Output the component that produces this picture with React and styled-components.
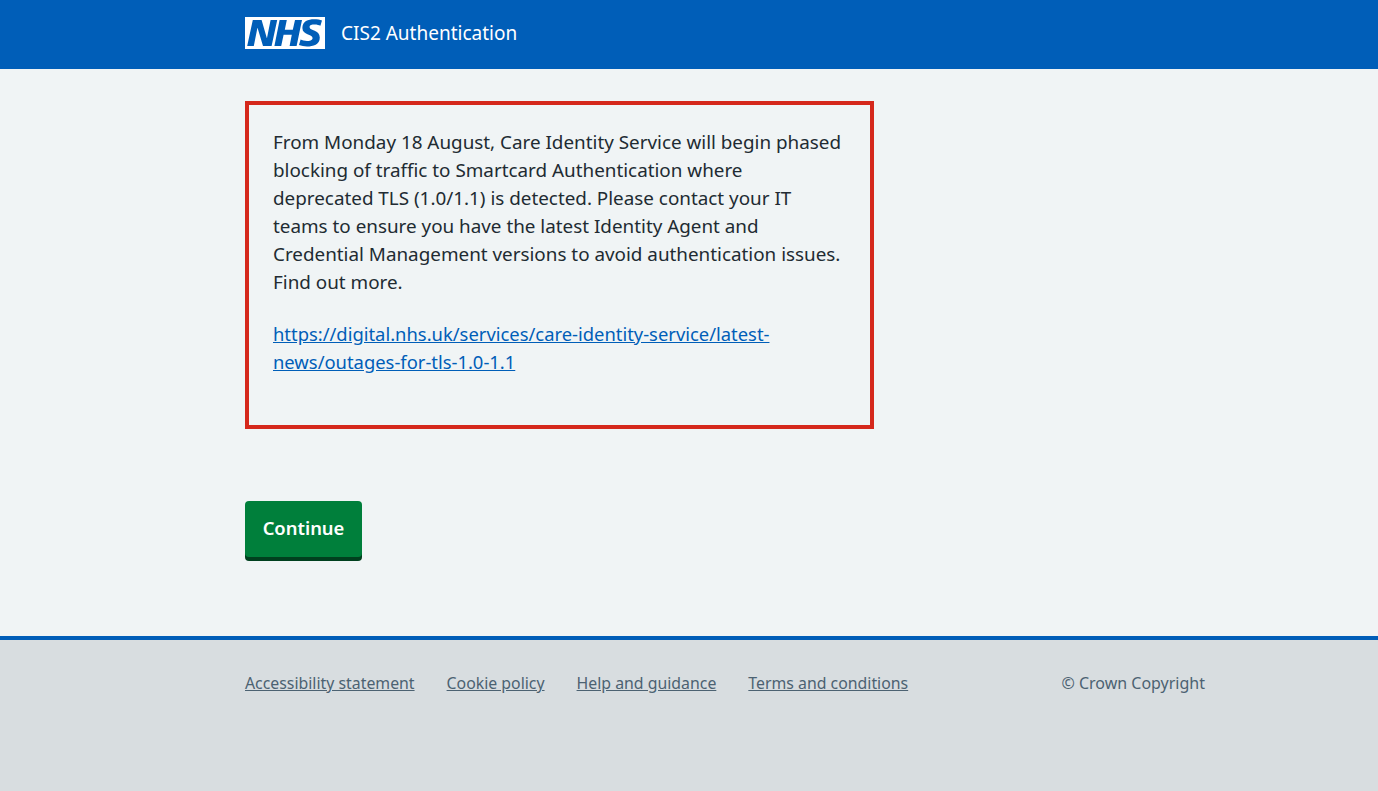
import React from 'react'
import styled, { createGlobalStyle } from 'styled-components'

const Global = createGlobalStyle`
  html, body {
    margin: 0;
    padding: 0;
    background: #f0f4f5;
    color: #212b32;
    font-family: "Noto Sans", "Open Sans", Arial, sans-serif;
  }
  a { color: inherit; }
`

const Page = styled.div`
  min-height: 791px;
  display: flex;
  flex-direction: column;
`

const Container = styled.div`
  width: 960px;
  margin-left: 245px;
`

const Header = styled.header`
  background: #005eb8;
  height: 69px;
  display: flex;
  align-items: flex-start;
`

const HeaderInner = styled(Container)`
  display: flex;
  align-items: center;
  gap: 16px;
  padding-top: 17px;
`

const Logo = styled.svg`
  width: 80px;
  height: 32px;
  display: block;
`

const ServiceName = styled.span`
  color: #fff;
  font-size: 19px;
  line-height: 32px;
`

const Main = styled.main`
  height: 567px;
  padding-top: 32px;
  box-sizing: border-box;
`

const Notice = styled.div`
  width: 629px;
  height: 328px;
  box-sizing: border-box;
  border: 4px solid #d5281b;
  padding: 23px 24px 0;
  font-size: 18.85px;
  line-height: 28px;
`

const Para = styled.p`
  margin: 0 0 24px;
`

const NoticeLink = styled.a`
  color: #005eb8;
  font-size: 18.4px;
`

const Button = styled.button`
  display: block;
  margin-top: 72px;
  width: 117px;
  height: 56px;
  border: 0;
  border-radius: 4px;
  background: #007f3b;
  box-shadow: 0 4px 0 #00401e;
  color: #fff;
  font-family: inherit;
  font-size: 18.4px;
  font-weight: 600;
  line-height: 24px;
  padding: 0 0 2px;
`

const Footer = styled.footer`
  flex: 1;
  background: #d8dde0;
  border-top: 4px solid #005eb8;
  height: 151px;
  box-sizing: border-box;
`

const FooterInner = styled(Container)`
  display: flex;
  justify-content: space-between;
  padding-top: 31px;
  font-size: 15.85px;
  line-height: 24px;
  color: #4c6272;
`

const FooterLinks = styled.div`
  display: flex;
  gap: 32px;
`

const FooterLink = styled.a`
  color: #4c6272;
`

const Copyright = styled.span`
  font-size: 16px;
`

const links = ['Accessibility statement', 'Cookie policy', 'Help and guidance', 'Terms and conditions']

export default function App() {
  return (
    <Page>
      <Global />
      <Header>
        <HeaderInner>
          <Logo viewBox="0 0 40 16" role="img" aria-label="NHS">
            <path fill="#fff" d="M0 0h40v16H0z" />
            <path
              fill="#005eb8"
              d="M3.9 1.5h4.4l2.6 9h.1l1.8-9h3.3l-2.8 13H9l-2.7-9h-.1l-1.8 9H1.1M17.3 1.5h3.6l-1 4.9h4L25 1.5h3.5l-2.7 13h-3.5l1.1-5.6h-4.1l-1.2 5.6h-3.4M37.7 4.4c-.7-.3-1.6-.6-2.9-.6-1.4 0-2.5.2-2.5 1.3 0 1.8 5.1 1.2 5.1 5.1 0 3.6-3.3 4.5-6.4 4.5-1.3 0-2.9-.3-4-.7l.8-2.7c.7.4 2.1.7 3.2.7s2.8-.2 2.8-1.5c0-2.1-5.1-1.3-5.1-5 0-3.4 2.9-4.4 5.8-4.4 1.6 0 3.1.2 4 .6"
            />
          </Logo>
          <ServiceName>CIS2 Authentication</ServiceName>
        </HeaderInner>
      </Header>
      <Main>
        <Container>
          <Notice>
            <Para>
              From Monday 18 August, Care Identity Service will begin phased<br />
              blocking of traffic to Smartcard Authentication where<br />
              deprecated TLS (1.0/1.1) is detected. Please contact your IT<br />
              teams to ensure you have the latest Identity Agent and<br />
              Credential Management versions to avoid authentication issues.<br />
              Find out more.
            </Para>
            <Para>
              <NoticeLink href="#">
                https://digital.nhs.uk/services/care-identity-service/latest-<br />
                news/outages-for-tls-1.0-1.1
              </NoticeLink>
            </Para>
          </Notice>
          <Button>Continue</Button>
        </Container>
      </Main>
      <Footer>
        <FooterInner>
          <FooterLinks>
            {links.map(l => (
              <FooterLink href="#" key={l}>{l}</FooterLink>
            ))}
          </FooterLinks>
          <Copyright>© Crown Copyright</Copyright>
        </FooterInner>
      </Footer>
    </Page>
  )
}
